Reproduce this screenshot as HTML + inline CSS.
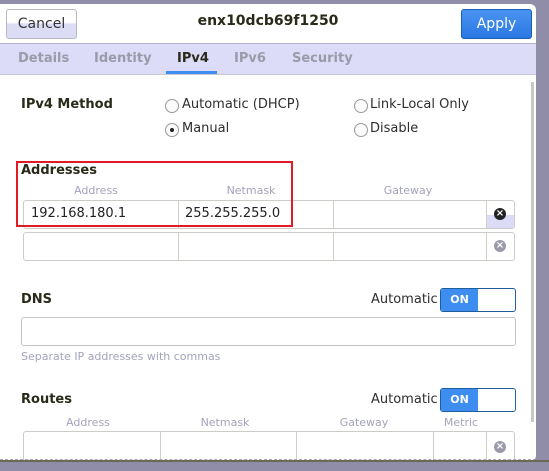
<!DOCTYPE html><html><head><style>
body{margin:0;width:549px;height:471px;background:#8f8da8;position:relative;overflow:hidden;font-family:"DejaVu Sans","Liberation Sans",sans-serif;}
.a{position:absolute}
.dlg{left:0;top:4px;width:536px;height:456px;background:#fff;border-radius:0 6px 4px 0;overflow:hidden}
.btn{position:absolute;top:5px;height:28px;border-radius:3px;font-size:14px;text-align:center;line-height:28px}
.t{position:absolute;font-size:13px;color:#2e2e2e;white-space:nowrap}
.b{font-weight:bold;color:#2a2a1a}
.lbl{position:absolute;font-size:11px;color:#a3a3bb;transform:translateX(-50%)}
.row{position:absolute;border:1px solid #ccccc6;border-radius:3px;background:#fff}
.sp{position:absolute;top:0;bottom:0;width:1px;background:#cfcfc8}
.radio{position:absolute;width:12px;height:12px;border:1px solid #999;border-radius:50%;background:#fbfbfb}
.x{position:absolute;width:12px;height:12px;border-radius:50%;color:#fff;font-size:10px;line-height:12px;text-align:center;font-weight:bold}
.sw{position:absolute;width:74px;height:22px;border:1px solid #1f5e9c;border-radius:3px;background:#fff;overflow:hidden}
.sw div{position:absolute;left:0;top:0;width:37px;height:22px;background:#3d8ef0;color:#fff;font-size:11px;font-weight:bold;text-align:center;line-height:22px}
</style></head><body>
<div class="a" style="left:0;top:460px;width:549px;height:2px;background:#6b6b55"></div>
<div class="a dlg">
 <div class="btn" style="left:6px;width:69px;border:1px solid #b8b8c8;background:linear-gradient(#fff 0,#fff 45%,#dcdcf4 50%);color:#333">Cancel</div>
 <div class="t b" style="left:268px;top:9px;transform:translateX(-50%);font-size:14px">enx10dcb69f1250</div>
 <div class="btn" style="left:461px;width:69px;border:1px solid #1a5fb4;background:linear-gradient(#4a94f0,#2a78e4);color:#fff">Apply</div>
 <div class="a" style="left:0;top:39px;width:536px;height:30px;background:#dcdcf8;border-top:1px solid #b4b4cc;border-bottom:1px solid #c8c8d8"></div>
 <div class="t b" style="left:18px;top:47px;color:#9a9aaa">Details</div>
 <div class="t b" style="left:94px;top:47px;color:#9a9aaa">Identity</div>
 <div class="t b" style="left:177px;top:47px;color:#2a2a1a">IPv4</div>
 <div class="t b" style="left:234px;top:47px;color:#9a9aaa">IPv6</div>
 <div class="t b" style="left:292px;top:47px;color:#9a9aaa">Security</div>
 <div class="a" style="left:166px;top:67px;width:51px;height:3px;background:#3d8ef0"></div>
 <div class="a" style="left:531px;top:78px;width:3px;height:340px;background:#c8c8c8"></div>

 <div class="t b" style="left:21px;top:93px">IPv4 Method</div>
 <div class="radio" style="left:165px;top:95px"></div><div class="t" style="left:182px;top:93px">Automatic (DHCP)</div>
 <div class="radio" style="left:354px;top:95px"></div><div class="t" style="left:370px;top:93px">Link-Local Only</div>
 <div class="radio" style="left:165px;top:119px"><div class="a" style="left:4px;top:4px;width:4px;height:4px;border-radius:50%;background:#222"></div></div><div class="t" style="left:182px;top:117px">Manual</div>
 <div class="radio" style="left:354px;top:119px"></div><div class="t" style="left:370px;top:117px">Disable</div>

 <div class="t b" style="left:21px;top:159px">Addresses</div>
 <div class="lbl" style="left:96px;top:180px">Address</div>
 <div class="lbl" style="left:251px;top:180px">Netmask</div>
 <div class="lbl" style="left:408px;top:180px">Gateway</div>
 <div class="row" style="left:23px;top:196px;width:490px;height:27px">
  <div class="sp" style="left:154px"></div><div class="sp" style="left:309px"></div><div class="sp" style="left:462px"></div>
  <div class="a" style="left:463px;top:14px;width:27px;height:13px;background:#dcdcf8"></div>
  <div class="x" style="left:470px;top:7px;background:#222">×</div>
  <div class="t" style="left:7px;top:5px;color:#222">192.168.180.1</div>
  <div class="t" style="left:161px;top:5px;color:#222">255.255.255.0</div>
 </div>
 <div class="row" style="left:23px;top:228px;width:490px;height:27px">
  <div class="sp" style="left:154px"></div><div class="sp" style="left:309px"></div><div class="sp" style="left:462px"></div>
  <div class="x" style="left:470px;top:7px;background:#9a9aaa">×</div>
 </div>
 <div class="a" style="left:16px;top:157px;width:273px;height:62px;border:2px solid #e01b24"></div>

 <div class="t b" style="left:21px;top:288px">DNS</div>
 <div class="t" style="left:371px;top:288px">Automatic</div>
 <div class="sw" style="left:440px;top:284px"><div>ON</div></div>
 <div class="row" style="left:21px;top:313px;width:493px;height:27px;border-color:#c4c4cc"></div>
 <div class="t" style="left:21px;top:346px;font-size:11px;color:#a3a3bb">Separate IP addresses with commas</div>

 <div class="t b" style="left:21px;top:388px">Routes</div>
 <div class="t" style="left:371px;top:388px">Automatic</div>
 <div class="sw" style="left:440px;top:384px"><div>ON</div></div>
 <div class="lbl" style="left:88px;top:412px">Address</div>
 <div class="lbl" style="left:225px;top:412px">Netmask</div>
 <div class="lbl" style="left:364px;top:412px">Gateway</div>
 <div class="lbl" style="left:461px;top:412px">Metric</div>
 <div class="row" style="left:23px;top:427px;width:490px;height:32px">
  <div class="sp" style="left:136px"></div><div class="sp" style="left:272px"></div><div class="sp" style="left:409px"></div><div class="sp" style="left:462px"></div>
  <div class="x" style="left:470px;top:9px;background:#9a9aaa">×</div>
 </div>
 <div class="a" style="left:0;top:455px;width:536px;height:0;border-top:1px dashed #aaa"></div>
</div>
</body></html>
